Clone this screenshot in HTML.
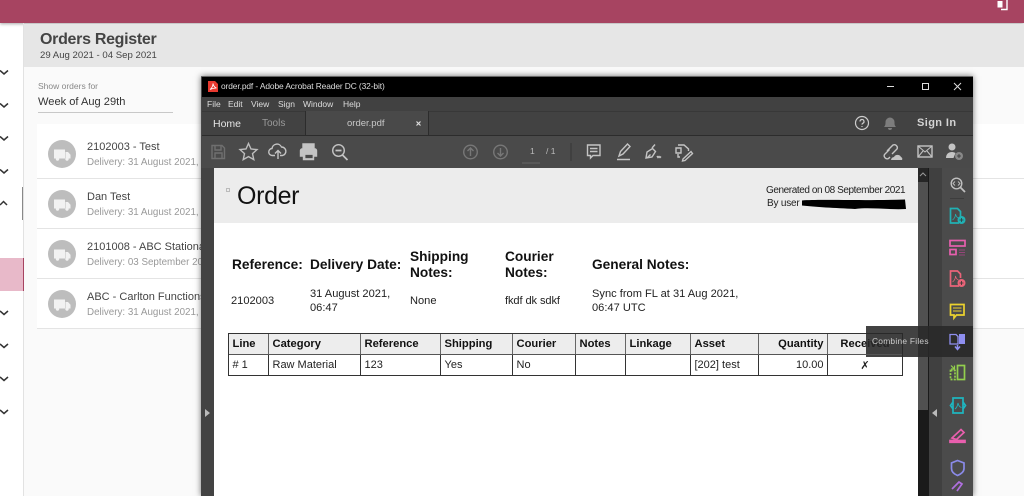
<!DOCTYPE html>
<html><head><meta charset="utf-8">
<style>
html,body{margin:0;padding:0;width:1024px;height:496px;overflow:hidden;background:#fff;font-family:"Liberation Sans",sans-serif}
.a{position:absolute;white-space:nowrap}
.b{position:absolute}
svg{position:absolute;overflow:visible}
.chev{fill:none;stroke:#333;stroke-width:1.5}
.circ{position:absolute;width:28px;height:28px;border-radius:50%;background:#bdbdbd}
.m{font-size:8.5px;color:#ddd;position:absolute;top:99px}
.ic{fill:none;stroke:#b4b4b4;stroke-width:1.4}
.h{font-size:13.7px;font-weight:bold;color:#111;position:absolute;line-height:16px;white-space:nowrap}
.v{font-size:11.1px;color:#222;position:absolute;line-height:13.5px;white-space:nowrap}
.th{position:absolute;top:334px;height:20px;background:#ededed;font-size:11.2px;font-weight:bold;color:#111;line-height:20px;box-sizing:border-box;padding:0 3.5px;border-right:1px solid #666}
.td{position:absolute;top:355px;height:20px;background:#fff;font-size:11px;color:#222;line-height:21px;box-sizing:border-box;padding:0 3.5px;border-right:1px solid #333}
.d{font-size:9.8px;color:#999}
.n{font-size:11px;color:#444}
</style></head><body>
<div class="b" style="left:0;top:0;width:1024px;height:23px;background:#a74461;box-shadow:0 1px 3px rgba(0,0,0,.35)"></div>
<svg style="left:995px;top:0" width="16" height="12"><path d="M6 9.500H12V0" fill="none" stroke="#fff" stroke-width="1.400"/><rect x="2.500" y="1" width="5" height="6.500" fill="#fff"/></svg>

<div class="b" style="left:23px;top:23px;width:1px;height:473px;background:#e2e2e2"></div>
<div class="b" style="left:24px;top:24px;width:1000px;height:43px;background:#e6e6e6"></div>
<div class="b" style="left:24px;top:67px;width:1000px;height:429px;background:#fafafa"></div>
<div class="a" style="left:40px;top:31px;font-size:16px;font-weight:bold;color:#444;letter-spacing:-.3px">Orders Register</div>
<div class="a" style="left:40px;top:50px;font-size:9.600px;color:#444">29 Aug 2021 - 04 Sep 2021</div>
<div class="a" style="left:38px;top:81px;font-size:8.500px;color:#888">Show orders for</div>
<div class="a" style="left:38px;top:96px;font-size:11.100px;color:#333">Week of Aug 29th</div>
<div class="b" style="left:38px;top:112px;width:135px;height:1px;background:#c8c8c8"></div>

<div class="b" style="left:37px;top:124px;width:987px;height:204px;background:#fff"></div>
<div class="b" style="left:37px;top:178px;width:987px;height:1px;background:#e4e4e4"></div>
<div class="b" style="left:37px;top:228px;width:987px;height:1px;background:#e4e4e4"></div>
<div class="b" style="left:37px;top:278px;width:987px;height:1px;background:#e4e4e4"></div>
<div class="b" style="left:37px;top:328px;width:987px;height:1px;background:#e4e4e4"></div>

<div class="circ" style="left:48px;top:140px"></div>
<div class="circ" style="left:48px;top:190px"></div>
<div class="circ" style="left:48px;top:240px"></div>
<div class="circ" style="left:48px;top:290px"></div>
<svg style="left:48px;top:140px" width="28" height="190" fill="#f2f2f2">
<g><path d="M6 9.500h11v9H6zM17.500 12h2.500l2.500 2.800v3.700h-5z"/><circle cx="9.500" cy="19" r="1.700"/><circle cx="19" cy="19" r="1.700"/></g>
<g transform="translate(0,50)"><path d="M6 9.500h11v9H6zM17.500 12h2.500l2.500 2.800v3.700h-5z"/><circle cx="9.500" cy="19" r="1.700"/><circle cx="19" cy="19" r="1.700"/></g>
<g transform="translate(0,100)"><path d="M6 9.500h11v9H6zM17.500 12h2.500l2.500 2.800v3.700h-5z"/><circle cx="9.500" cy="19" r="1.700"/><circle cx="19" cy="19" r="1.700"/></g>
<g transform="translate(0,150)"><path d="M6 9.500h11v9H6zM17.500 12h2.500l2.500 2.800v3.700h-5z"/><circle cx="9.500" cy="19" r="1.700"/><circle cx="19" cy="19" r="1.700"/></g>
</svg>

<div class="a n" style="left:87px;top:141px">2102003 - Test</div>
<div class="a d" style="left:87px;top:157px">Delivery: 31 August 2021, 5</div>
<div class="a n" style="left:87px;top:191px">Dan Test</div>
<div class="a d" style="left:87px;top:207px">Delivery: 31 August 2021, 0</div>
<div class="a n" style="left:87px;top:241px">2101008 - ABC Stationa</div>
<div class="a d" style="left:87px;top:257px">Delivery: 03 September 202</div>
<div class="a n" style="left:87px;top:291px">ABC - Carlton Functions</div>
<div class="a d" style="left:87px;top:307px">Delivery: 31 August 2021, 5</div>

<svg style="left:0;top:0" width="23" height="496" class="chev">
<path d="M0 70.500l4 3.500 4-3.500M0 103.500l4 3.500 4-3.500M0 136.500l4 3.500 4-3.500M0 169.500l4 3.500 4-3.500M0 205l3.500-3.500 3.500 3.500M0 311l4 3.500 4-3.500M0 344l4 3.500 4-3.500M0 377l4 3.500 4-3.500M0 410l4 3.500 4-3.500"/>
</svg>
<div class="b" style="left:22px;top:187px;width:1px;height:33px;background:#888"></div>
<div class="b" style="left:0;top:258px;width:23px;height:33px;background:#e8b9c9;border-right:1px solid #a74461"></div>

<!-- Acrobat window -->
<div class="b" style="left:201px;top:76px;width:772px;height:420px;background:#484848;box-shadow:0 0 6px rgba(0,0,0,.55)"></div>
<div class="b" style="left:201px;top:76px;width:772px;height:1px;background:#666"></div>
<div class="b" style="left:202px;top:77px;width:771px;height:20px;background:#000"></div>
<svg style="left:208px;top:81px" width="10" height="11"><path d="M0 0h7l3 3v8H0z" fill="#e8392f"/><path d="M2 8.500C4 7 5 4.500 5 2.500 5.500 5 6.500 6.500 8.500 7 6 7 4 7.500 2 8.500z" fill="none" stroke="#fff" stroke-width=".8"/></svg>
<div class="a" style="left:221px;top:81px;font-size:8.400px;color:#ddd;letter-spacing:-.1px">order.pdf - Adobe Acrobat Reader DC (32-bit)</div>
<svg style="left:885px;top:80px" width="82" height="14" fill="none" stroke="#ddd" stroke-width="1">
<path d="M2 6.500H9"/><rect x="37.500" y="3.500" width="6" height="6"/><path d="M69 3l7 7M76 3l-7 7"/>
</svg>

<div class="b" style="left:202px;top:97px;width:771px;height:14px;background:#414141"></div>
<div class="a m" style="left:207px">File</div>
<div class="a m" style="left:228px">Edit</div>
<div class="a m" style="left:251px">View</div>
<div class="a m" style="left:278px">Sign</div>
<div class="a m" style="left:303px">Window</div>
<div class="a m" style="left:343px">Help</div>

<div class="b" style="left:202px;top:111px;width:771px;height:24px;background:#424242;border-top:1px solid #383838;border-bottom:1px solid #2c2c2c"></div>
<div class="b" style="left:305px;top:111px;width:122px;height:26px;background:#494949;border-left:1px solid #2c2c2c;border-right:1px solid #2c2c2c"></div>
<div class="a" style="left:213px;top:118px;font-size:10.500px;color:#e4e4e4">Home</div>
<div class="a" style="left:262px;top:118px;font-size:10px;color:#9a9a9a">Tools</div>
<div class="a" style="left:347px;top:118px;font-size:9.500px;color:#c8c8c8">order.pdf</div>
<svg style="left:415px;top:120px" width="8" height="8" stroke="#ddd" stroke-width="1.200"><path d="M1.500 1.500l4 4M5.500 1.500l-4 4"/></svg>
<svg style="left:854px;top:115px" width="16" height="16" fill="none" stroke="#ccc" stroke-width="1.200"><circle cx="8" cy="8" r="6.500"/><path d="M6 6.500a2 2 0 1 1 2.800 1.800c-.6.300-.8.700-.8 1.300M8 11v1"/></svg>
<svg style="left:883px;top:116px" width="14" height="15" fill="#7d7d7d"><path d="M1 11c1.500-1.500 1.500-3 1.500-5a4.500 4.500 0 0 1 9 0c0 2 0 3.500 1.500 5zM5 12h4a2 2 0 0 1-4 0z"/></svg>
<div class="a" style="left:917px;top:117px;font-size:11px;font-weight:bold;color:#d4d4d4;letter-spacing:.4px">Sign In</div>

<div class="b" style="left:202px;top:136px;width:771px;height:32px;background:#4a4a4a"></div>
<div class="b" style="left:202px;top:135px;width:771px;height:1px;background:#2c2c2c"></div>
<svg style="left:202px;top:136px" width="771" height="32" class="ic">
<path d="M10 9.500h10l2.500 2.500v10.500h-12.500zM13 9.500v4.500h6v-4.500M13 22.500v-5.500h7v5.500" stroke="#6f6f6f"/>
<path d="M46.500 7.500l2.500 5.500 6 .6-4.500 4 1.300 6-5.300-3-5.300 3 1.300-6-4.500-4 6-.6z" stroke="#bdbdbd"/>
<path d="M73 19.500h-2.500a3.500 3.500 0 0 1-.5-7 5 5 0 0 1 9.500-1.500 4.300 4.300 0 0 1 1 8.500H78M76 23v-8M73 17.500l3-3 3 3" stroke="#c4c4c4"/>
<path d="M101 13V8h11v5M100 13h13a1.500 1.500 0 0 1 1.500 1.500V20h-3v3.500h-10V20H98.500v-5.500A1.500 1.500 0 0 1 100 13z" fill="#c4c4c4" stroke="#c4c4c4"/>
<path d="M103 18.500h8v4h-8z" fill="#4a4a4a" stroke="#c4c4c4" stroke-width=".8"/>
<circle cx="136.500" cy="14.500" r="5.800" stroke="#c4c4c4"/><path d="M140.500 19l5 5M133.500 14.500h6" stroke="#c4c4c4" stroke-width="1.700"/>
<circle cx="268.500" cy="16" r="6.800" stroke="#777"/><path d="M268.500 20v-8M265.500 15l3-3 3 3" stroke="#777"/>
<circle cx="298.500" cy="16" r="6.800" stroke="#777"/><path d="M298.500 12v8M295.500 17l3 3 3-3" stroke="#777"/>
<path d="M320 27h18" stroke="#5c5c5c"/>
<path d="M369 7v18" stroke="#3d3d3d"/>
<path d="M385.500 9h12.500v10.500h-7l-2.500 2.500v-2.500h-3zM388 12.500h7.500M388 15.500h7.500" stroke="#c4c4c4"/>
<path d="M417 20l1.500-4.500 7-7.500 2.500 2.500-7 7.500zM415 23.500h13" stroke="#c4c4c4"/>
<path d="M444 22l1-6 5.500-3.500 3 3-3.500 5.500zM450 12l3-3.500M445 22l3.500-3.500M455 20l1 1.500 1-1 1 1 1-1" stroke="#c4c4c4"/>
<path d="M476 9h6l4.500 4v2M478 21h-2v-3M476 12h-2v5h5v-5h-3zM481 23l8-7.500 1.500 2-7.500 7-2.500.5z" stroke="#c4c4c4"/>
<path d="M685 15l6-6a3 3 0 0 1 4 4l-5 5M688 21l-1.500 1.500a3 3 0 0 1-4-4l5-5" stroke="#c4c4c4"/>
<path d="M689 24a3.500 3.500 0 0 1 3-3 4 4 0 0 1 7 0 2 2 0 0 1 1 3z" fill="#c4c4c4" stroke="none"/>
<rect x="716" y="10" width="14" height="11" stroke="#c4c4c4"/><path d="M716 10l7 6 7-6M716 21l5-6M730 21l-5-6" stroke="#c4c4c4" stroke-width="1"/>
<circle cx="750" cy="11" r="3.500" fill="#c4c4c4" stroke="none"/><path d="M744 22c0-4 2.500-6 6-6 1.500 0 2.500.5 3.500 1l-2 5z" fill="#c4c4c4" stroke="none"/>
<circle cx="757" cy="20" r="4" fill="#888" stroke="none"/><path d="M755 20h4M757 18v4" stroke="#333" stroke-width=".8"/>
</svg>
<div class="a" style="left:530px;top:146px;font-size:8.500px;color:#bbb">1</div>
<div class="a" style="left:546px;top:146px;font-size:8.500px;color:#bbb">/ 1</div>

<!-- document area -->
<div class="b" style="left:201px;top:168px;width:13px;height:328px;background:#434343"></div>
<div class="b" style="left:214px;top:168px;width:704px;height:328px;background:#fff"></div>
<div class="b" style="left:214px;top:168px;width:704px;height:55px;background:#ececec"></div>
<svg style="left:205px;top:409px" width="6" height="8"><path d="M0 0l5 4-5 4z" fill="#bbb"/></svg>
<div class="b" style="left:226px;top:188px;width:2px;height:2px;border:1px solid #bbb"></div>
<div class="a" style="left:237px;top:181.500px;font-size:25px;color:#111;letter-spacing:-.35px">Order</div>
<div class="a" style="left:766px;top:184.500px;font-size:10px;color:#222;letter-spacing:-.42px">Generated on 08 September 2021</div>
<div class="a" style="left:767px;top:198px;font-size:10px;color:#222;letter-spacing:-.2px">By user</div>
<svg style="left:800px;top:198px" width="107" height="13"><path d="M2 2.500C20 1 60 3 105 1.500L106 11C90 12 70 9 55 11 35 10 15 9 2 7.500z" fill="#000"/></svg>

<div class="h" style="left:232px;top:257px">Reference:</div>
<div class="h" style="left:310px;top:257px">Delivery Date:</div>
<div class="h" style="left:410px;top:249px">Shipping<br>Notes:</div>
<div class="h" style="left:505px;top:249px">Courier<br>Notes:</div>
<div class="h" style="left:592px;top:257px">General Notes:</div>
<div class="v" style="left:231px;top:295px">2102003</div>
<div class="v" style="left:310px;top:288px">31 August 2021,<br>06:47</div>
<div class="v" style="left:410px;top:295px">None</div>
<div class="v" style="left:505px;top:295px;letter-spacing:-.1px">fkdf dk sdkf</div>
<div class="v" style="left:592px;top:288px">Sync from FL at 31 Aug 2021,<br>06:47 UTC</div>

<!-- table -->
<div class="b" style="left:228px;top:333px;width:675px;height:43px;border:1px solid #333;box-sizing:border-box;background:#fff"></div>
<div class="th" style="left:229px;width:40px">Line</div>
<div class="th" style="left:269px;width:92px">Category</div>
<div class="th" style="left:361px;width:80px">Reference</div>
<div class="th" style="left:441px;width:72px">Shipping</div>
<div class="th" style="left:513px;width:63px">Courier</div>
<div class="th" style="left:576px;width:50px">Notes</div>
<div class="th" style="left:626px;width:65px">Linkage</div>
<div class="th" style="left:691px;width:68px">Asset</div>
<div class="th" style="left:759px;width:69px;text-align:right">Quantity</div>
<div class="th" style="left:828px;width:74px;text-align:center;border-right:0">Received</div>
<div class="b" style="left:229px;top:354px;width:673px;height:1px;background:#555;z-index:2"></div>
<div class="td" style="left:229px;width:40px">#&nbsp;1</div>
<div class="td" style="left:269px;width:92px">Raw Material</div>
<div class="td" style="left:361px;width:80px">123</div>
<div class="td" style="left:441px;width:72px">Yes</div>
<div class="td" style="left:513px;width:63px">No</div>
<div class="td" style="left:576px;width:50px"></div>
<div class="td" style="left:626px;width:65px"></div>
<div class="td" style="left:691px;width:68px">[202] test</div>
<div class="td" style="left:759px;width:69px;text-align:right">10.00</div>
<div class="td" style="left:828px;width:74px;text-align:center;border-right:0;font-family:'DejaVu Sans',sans-serif">✗</div>

<!-- scrollbar & side panel -->
<div class="b" style="left:918px;top:168px;width:11px;height:328px;background:#1a1a1a"></div>
<div class="b" style="left:918px;top:182px;width:10px;height:228px;background:#505050"></div>
<div class="b" style="left:918px;top:168px;width:10px;height:14px;background:#262626"></div>
<svg style="left:919px;top:172px" width="8" height="5" fill="none" stroke="#999"><path d="M1 4l3-3 3 3"/></svg>
<div class="b" style="left:929px;top:168px;width:13px;height:328px;background:#404040"></div>
<svg style="left:932px;top:409px" width="6" height="8"><path d="M5 0L0 4l5 4z" fill="#bbb"/></svg>
<div class="b" style="left:942px;top:168px;width:31px;height:328px;background:#4b4b4b"></div>

<!-- tooltip -->
<div class="b" style="left:866px;top:326px;width:107px;height:31px;background:rgba(40,40,40,.88)"></div>
<div class="a" style="left:872px;top:336px;font-size:8.400px;color:#ccc;letter-spacing:.25px">Combine Files</div>

<svg style="left:942px;top:167px" width="31" height="329" fill="none" stroke-width="1.700">
<circle cx="14.500" cy="16.500" r="5.300" stroke="#c0c0c0" stroke-width="1.400"/><path d="M18.500 20.500l4.500 4.500" stroke="#c0c0c0" stroke-width="1.800"/><path d="M13 14.500l-2 2 2 2M16 14.500l2 2-2 2" stroke="#c0c0c0" stroke-width=".9"/>
<path d="M8 31.500h14" stroke="#3d3d3d" stroke-width="1"/>
<path d="M17 56h-8.500v-14.500h7l3 3v5" stroke="#21b1b4"/><circle cx="19.500" cy="53" r="4" fill="#21b1b4" stroke="none"/><path d="M17.500 53h4M19.500 51v4" stroke="#333" stroke-width=".7"/><path d="M10.500 53c2-1.500 3-3.500 3-6 .5 2 1.500 3.500 3 4" stroke="#21b1b4" stroke-width=".7"/>
<rect x="8" y="73.500" width="15" height="5.500" stroke="#e75fae"/><rect x="8" y="82.500" width="6" height="5" stroke="#e75fae"/><path d="M17 83h6M17 85.500h6M17 88h6" stroke="#96457a" stroke-width="1"/>
<path d="M17 119h-8.500v-15h7l3 3v4" stroke="#ea6479"/><circle cx="19.500" cy="116" r="4" fill="#ea6479" stroke="none"/><path d="M17.500 116h4M19.500 114v4" stroke="#333" stroke-width=".8"/><path d="M10.500 115c2-1.500 3-3.500 3-6 .5 2 1.500 3.500 3 4" stroke="#ea6479" stroke-width=".7"/>
<path d="M8.500 137.500h13.500v10.500h-7.500l-2.500 3v-3h-3.500z" stroke="#ecd22e"/><path d="M11 141h8.500M11 144h8.500" stroke="#ecd22e" stroke-width="1.100"/>
<path d="M8 167.500h6l2 2v7.500H8z" stroke="#8f8ff0" stroke-width="1.300"/><path d="M17 167h6v10h-6z" fill="#8f8ff0"/><path d="M15.500 178v4M13 179.500l2.500 3 2.500-3" stroke="#8f8ff0" stroke-width="1.500"/>
<rect x="15.500" y="198.500" width="7" height="14" stroke="#93cf4d"/><path d="M8.500 203.500h4.500v9H8.500z" stroke="#93cf4d" stroke-dasharray="2 1.200"/><path d="M9 198.500l3.500 3.500M9 202h3.500v-3.500" stroke="#93cf4d" stroke-width="1.200"/>
<path d="M11 231h10v15H11zM11 235l-2.500 3.500 2.500 3.500M21 235l2.500 3.500-2.500 3.500" stroke="#1fb5bf"/><path d="M13 242c1.500-1 2.500-3 3-6 .5 2.500 1.500 4 3.500 4.500" stroke="#1fb5bf" stroke-width=".8"/>
<path d="M10 271l9-8.500 3 3-7.500 7z" stroke="#e95fae"/><path d="M8 273.500h15v1.800H8z" fill="#e95fae" stroke="#e95fae"/>
<path d="M15.500 293.500l6.500 2.500v5.500c0 3.500-3 5.500-6.500 7-3.500-1.500-6-3.500-6-7v-5.500z" stroke="#8a8ae8"/>
<path d="M10 322l7-7 3 2-5 7" stroke="#b06fe0"/>
</svg>
</body></html>
